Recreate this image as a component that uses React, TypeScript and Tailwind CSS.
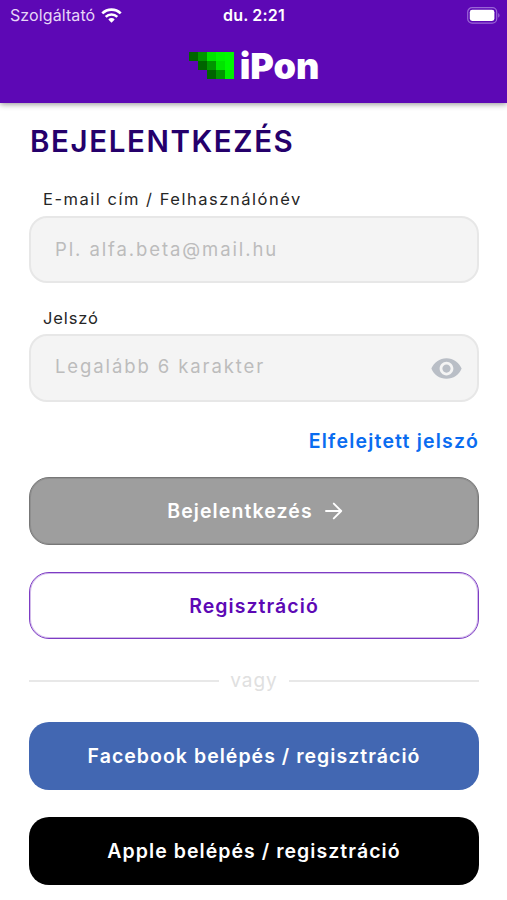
import { useState } from "react";
import { MdVisibility } from "react-icons/md";

const tiles = [
  { x: 0, y: 0, color: "#006400" },
  { x: 1, y: 0, color: "#009600" },
  { x: 2, y: 0, color: "#00e400" },
  { x: 3, y: 0, color: "#00f500" },
  { x: 4, y: 0, color: "#00fa00" },
  { x: 1, y: 1, color: "#006400" },
  { x: 2, y: 1, color: "#009600" },
  { x: 3, y: 1, color: "#00e400" },
  { x: 4, y: 1, color: "#00fa00" },
  { x: 2, y: 2, color: "#006400" },
  { x: 3, y: 2, color: "#009600" },
  { x: 4, y: 2, color: "#00f000" },
];

function StatusBar() {
  return (
    <div className="grid h-[30px] grid-cols-3 items-center pl-[10px] pr-[7px] text-[16px] text-white">
      <div className="flex items-center gap-[6px] text-[#e6d6f7]">
        <span className="tracking-[0.1px]">Szolgáltató</span>
        <svg width="21" height="15" viewBox="0 0 21 15" fill="none">
          <path d="M1.3 5.4a13.2 13.2 0 0 1 18.4 0" stroke="#fff" strokeWidth="2.7" />
          <path d="M4.7 8.9a8.3 8.3 0 0 1 11.6 0" stroke="#fff" strokeWidth="2.6" />
          <path d="M10.5 14.7 7.3 11.4a4.6 4.6 0 0 1 6.4 0z" fill="#fff" />
        </svg>
      </div>
      <span className="pr-[2px] text-center font-semibold tracking-[0.2px]">du. 2:21</span>
      <svg className="justify-self-end" width="33" height="17" viewBox="0 0 33 17" fill="none">
        <rect x="0.7" y="0.7" width="29" height="15.4" rx="4.4" stroke="#9a66d6" strokeWidth="1.2" />
        <rect x="2.8" y="2.8" width="24.6" height="11.2" rx="2.4" fill="#fff" />
        <path d="M31.2 6v4.8c1.8-.8 1.8-4 0-4.8z" fill="#9a66d6" />
      </svg>
    </div>
  );
}

function Logo() {
  return (
    <div className="flex h-[27px] items-center justify-center gap-[6px] pl-[1px]">
      <svg width="45" height="27" viewBox="0 0 5 3" preserveAspectRatio="none" shapeRendering="crispEdges">
        {tiles.map((t) => (
          <rect key={`${t.x}-${t.y}`} x={t.x} y={t.y} width="1" height="1" fill={t.color} />
        ))}
      </svg>
      <span className="pt-[1px] text-[36px] font-black leading-[27px] tracking-[-0.1px] text-white">iPon</span>
    </div>
  );
}

export default function App() {
  const [email, setEmail] = useState("");
  const [password, setPassword] = useState("");
  const [visible, setVisible] = useState(false);

  return (
    <div className="h-[900px] w-[507px] overflow-hidden bg-white font-[Inter,sans-serif]">
      <header className="h-[103px] bg-[#5d08b5] shadow-[0_1px_6px_rgba(0,0,0,0.45)]">
        <StatusBar />
        <div className="pt-[22px]">
          <Logo />
        </div>
      </header>

      <main className="flex flex-col pl-[29px] pr-[28px] pt-5">
        <h1 className="whitespace-nowrap pl-[1px] text-[29.5px] font-semibold leading-9 tracking-[1.6px] text-[#25006b]">
          BEJELENTKEZÉS
        </h1>

        <label htmlFor="email" className="mt-[30px] pl-[14px] text-[16.5px] leading-5 tracking-[1.52px] text-[#262626]">
          E-mail cím / Felhasználónév
        </label>
        <input
          id="email"
          value={email}
          onChange={(e) => setEmail(e.target.value)}
          placeholder="Pl. alfa.beta@mail.hu"
          className="mt-[7px] h-[67px] rounded-[18px] border-2 border-[#e7e7e7] bg-[#f4f4f4] px-[24px] pb-[2px] text-[18.5px] tracking-[1.9px] outline-none placeholder:text-[#bcbcbc]"
        />

        <label htmlFor="password" className="mt-[25px] pl-[14px] text-[16.5px] leading-5 tracking-[0.9px] text-[#262626]">
          Jelszó
        </label>
        <div className="mt-[6px] flex h-[68px] items-center rounded-[18px] border-2 border-[#e7e7e7] bg-[#f4f4f4] pl-[24px] pr-[14px]">
          <input
            id="password"
            type={visible ? "text" : "password"}
            value={password}
            onChange={(e) => setPassword(e.target.value)}
            placeholder="Legalább 6 karakter"
            className="min-w-0 flex-1 pb-[2px] text-[18.5px] tracking-[1.9px] outline-none placeholder:text-[#bcbcbc]"
          />
          <button onClick={() => setVisible(!visible)} className="text-[#b9bec6]">
            <MdVisibility size={33} />
          </button>
        </div>

        <a href="#" className="mt-[29px] self-end whitespace-nowrap text-[19.5px] font-semibold leading-5 tracking-[1.2px] text-[#0a6cf0]">
          Elfelejtett jelszó
        </a>

        <button className="mt-[26px] flex h-[68px] items-center justify-center gap-[12px] rounded-[20px] border border-[#777777] bg-[#9e9e9e] pl-[2px] pt-[2px] text-[19.5px] font-semibold tracking-[1.1px] text-white shadow-[inset_0_0_0_1px_rgba(119,119,119,0.4)]">
          Bejelentkezés
          <svg className="mb-[2px]" width="18" height="18" viewBox="0 0 18 18" fill="none" stroke="#fff" strokeWidth="1.9">
            <path d="M1 9h15M8.8 1.6 16.2 9l-7.4 7.4" strokeLinecap="round" strokeLinejoin="round" />
          </svg>
        </button>

        <button className="mt-[27px] h-[67px] rounded-[20px] border border-[#7d3cc4] pt-[2px] text-[19.5px] font-semibold tracking-[1.05px] text-[#5d08b5] shadow-[inset_0_0_0_1px_rgba(125,60,196,0.35)]">
          Regisztráció
        </button>

        <div className="mt-8 flex h-5 items-center gap-[11px] text-[19px] tracking-[1px] text-[#e0e0e0]">
          <span className="h-[2px] flex-1 bg-[#e8e8e8]" />
          <span className="leading-5">vagy</span>
          <span className="h-[2px] flex-1 bg-[#e8e8e8]" />
        </div>

        <button className="mt-[31px] h-[68px] rounded-[20px] bg-[#4267b2] pt-[2px] text-[19.5px] font-semibold tracking-[1.03px] text-white">
          Facebook belépés / regisztráció
        </button>

        <button className="mt-[27px] h-[68px] rounded-[20px] bg-black pt-[2px] text-[19.5px] font-semibold tracking-[1.05px] text-white">
          Apple belépés / regisztráció
        </button>
      </main>
    </div>
  );
}
